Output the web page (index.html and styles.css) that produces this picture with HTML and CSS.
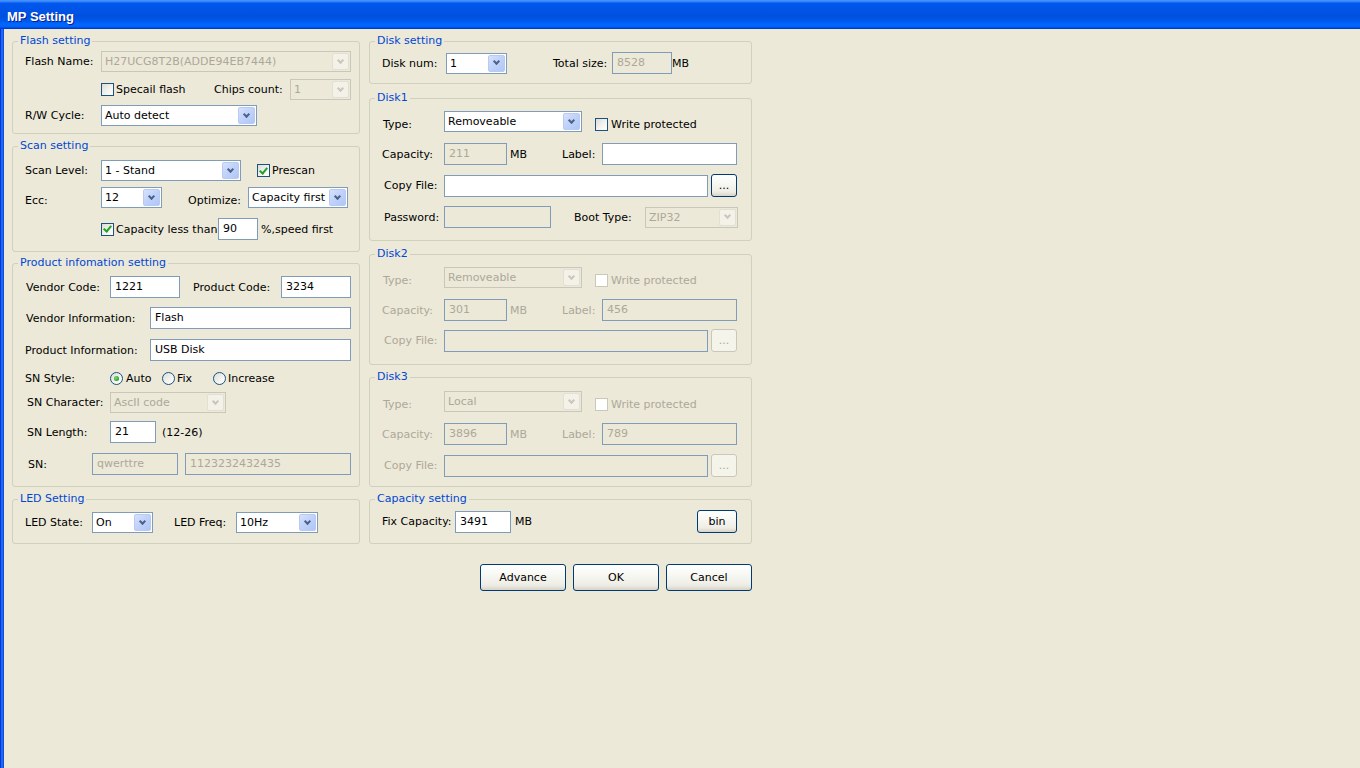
FILE: index.html
```html
<!DOCTYPE html>
<html lang="en">
<head>
<meta charset="utf-8">
<title>MP Setting</title>
<link rel="stylesheet" href="styles.css">
</head>
<body>
<div class="window">
  <div class="titlebar"><span class="title">MP Setting</span></div>
  <div class="client">
    <div class="col col-left">
      <fieldset class="group pb7">
        <legend>Flash setting</legend>
        <div class="row mt3">
          <span class="lbl w76">Flash Name:</span>
          <div class="combo dis w250"><span class="val">H27UCG8T2B(ADDE94EB7444)</span><span class="arr"></span></div>
        </div>
        <div class="row mt7">
          <span class="lbl w76"></span>
          <span class="ck w113"><span class="box"></span><span>Specail flash</span></span>
          <span class="lbl w76">Chips count:</span>
          <div class="combo dis w61"><span class="val">1</span><span class="arr"></span></div>
        </div>
        <div class="row mt5">
          <span class="lbl w76">R/W Cycle:</span>
          <div class="combo w156"><span class="val">Auto detect</span><span class="arr"></span></div>
        </div>
      </fieldset>

      <fieldset class="group mt5 pb11">
        <legend>Scan setting</legend>
        <div class="row mt7">
          <span class="lbl w76">Scan Level:</span>
          <div class="combo w140"><span class="val">1 - Stand</span><span class="arr"></span></div>
          <span class="ck ml16"><span class="box on"></span><span>Prescan</span></span>
        </div>
        <div class="row mt6">
          <span class="lbl w76 lo">Ecc:</span>
          <div class="combo w61"><span class="val">12</span><span class="arr"></span></div>
          <span class="lbl ml26 w60 lo">Optimize:</span>
          <div class="combo w100"><span class="val">Capacity first</span><span class="arr"></span></div>
        </div>
        <div class="row mt10">
          <span class="lbl w76"></span>
          <span class="ck w117"><span class="box on"></span><span>Capacity less than</span></span>
          <input class="tb w40" type="text" value="90">
          <span class="lbl ml3">%,speed first</span>
        </div>
      </fieldset>

      <fieldset class="group mt4 pb11">
        <legend>Product infomation setting</legend>
        <div class="row mt6 pl13">
          <span class="lbl w84">Vendor Code:</span>
          <input class="tb w70" type="text" value="1221">
          <span class="lbl ml13 w88">Product Code:</span>
          <input class="tb w70" type="text" value="3234">
        </div>
        <div class="row mt9 pl13">
          <span class="lbl w124">Vendor Information:</span>
          <input class="tb w201" type="text" value="Flash">
        </div>
        <div class="row mt10">
          <span class="lbl w125">Product Information:</span>
          <input class="tb w201" type="text" value="USB Disk">
        </div>
        <div class="row mt11">
          <span class="lbl w85">SN Style:</span>
          <span class="ck g3 w52"><span class="radio on"></span><span>Auto</span></span>
          <span class="ck w51"><span class="radio"></span><span>Fix</span></span>
          <span class="ck"><span class="radio"></span><span>Increase</span></span>
        </div>
        <div class="row mt7 pl14">
          <span class="lbl w83">SN Character:</span>
          <div class="combo dis w116"><span class="val">AscII code</span><span class="arr"></span></div>
        </div>
        <div class="row mt8 pl14">
          <span class="lbl w83">SN Length:</span>
          <input class="tb w46" type="text" value="21">
          <span class="lbl ml6">(12-26)</span>
        </div>
        <div class="row mt10 pl15">
          <span class="lbl w64">SN:</span>
          <input class="tb w86" type="text" value="qwerttre" disabled>
          <input class="tb ml7 w166" type="text" value="1123232432435" disabled>
        </div>
      </fieldset>

      <fieldset class="group mt5 pb10">
        <legend>LED Setting</legend>
        <div class="row mt6">
          <span class="lbl w67">LED State:</span>
          <div class="combo w61"><span class="val">On</span><span class="arr"></span></div>
          <span class="lbl ml21 w62">LED Freq:</span>
          <div class="combo w82"><span class="val">10Hz</span><span class="arr"></span></div>
        </div>
      </fieldset>
    </div>

    <div class="col col-right">
      <fieldset class="group pb9">
        <legend>Disk setting</legend>
        <div class="row mt4">
          <span class="lbl w64">Disk num:</span>
          <div class="combo w61"><span class="val">1</span><span class="arr"></span></div>
          <span class="lbl ml46 w59">Total size:</span>
          <input class="tb w60" type="text" value="8528" disabled>
          <span class="lbl">MB</span>
        </div>
      </fieldset>

      <fieldset class="group mt7 pb12">
        <legend>Disk1</legend>
        <div class="row mt6 pl13">
          <span class="lbl w61 lo">Type:</span>
          <div class="combo w138"><span class="val">Removeable</span><span class="arr"></span></div>
          <span class="ck g3 ml13 lo"><span class="box"></span><span>Write protected</span></span>
        </div>
        <div class="row mt11">
          <span class="lbl w62">Capacity:</span>
          <input class="tb w63" type="text" value="211" disabled>
          <span class="lbl ml3 w52">MB</span>
          <span class="lbl w40">Label:</span>
          <input class="tb w135" type="text" value="">
        </div>
        <div class="row mt9 pl14">
          <span class="lbl w60">Copy File:</span>
          <input class="tb w264" type="text" value="">
          <button class="btn ml3 w26 h23" type="button">...</button>
        </div>
        <div class="row mt9 pl14">
          <span class="lbl w60">Password:</span>
          <input class="tb w107" type="text" value="" disabled>
          <span class="lbl ml23 w71">Boot Type:</span>
          <div class="combo dis w93"><span class="val">ZIP32</span><span class="arr"></span></div>
        </div>
      </fieldset>

      <fieldset class="group mt6 pb12 off">
        <legend>Disk2</legend>
        <div class="row mt6 pl13">
          <span class="lbl w61 lo">Type:</span>
          <div class="combo dis w138"><span class="val">Removeable</span><span class="arr"></span></div>
          <span class="ck g3 ml13 lo"><span class="box dbox"></span><span>Write protected</span></span>
        </div>
        <div class="row mt11">
          <span class="lbl w62">Capacity:</span>
          <input class="tb w63" type="text" value="301" disabled>
          <span class="lbl ml3 w52">MB</span>
          <span class="lbl w40">Label:</span>
          <input class="tb w135" type="text" value="456" disabled>
        </div>
        <div class="row mt8 pl14">
          <span class="lbl w60">Copy File:</span>
          <input class="tb w264" type="text" value="" disabled>
          <button class="btn ml3 w26 h23" type="button" disabled>...</button>
        </div>
      </fieldset>

      <fieldset class="group mt5 pb9 off">
        <legend>Disk3</legend>
        <div class="row mt7 pl13">
          <span class="lbl w61 lo">Type:</span>
          <div class="combo dis w138"><span class="val">Local</span><span class="arr"></span></div>
          <span class="ck g3 ml13 lo"><span class="box dbox"></span><span>Write protected</span></span>
        </div>
        <div class="row mt11">
          <span class="lbl w62">Capacity:</span>
          <input class="tb w63" type="text" value="3896" disabled>
          <span class="lbl ml3 w52">MB</span>
          <span class="lbl w40">Label:</span>
          <input class="tb w135" type="text" value="789" disabled>
        </div>
        <div class="row mt9 pl14">
          <span class="lbl w60">Copy File:</span>
          <input class="tb w264" type="text" value="" disabled>
          <button class="btn ml3 w26 h23" type="button" disabled>...</button>
        </div>
      </fieldset>

      <fieldset class="group mt5 pb10">
        <legend>Capacity setting</legend>
        <div class="row mt4 pr14">
          <span class="lbl w73">Fix Capacity:</span>
          <input class="tb w56" type="text" value="3491">
          <span class="lbl ml4">MB</span>
          <button class="btn push w40 h23" type="button">bin</button>
        </div>
      </fieldset>

      <div class="actions">
        <button class="btn w86 h27" type="button">Advance</button>
        <button class="btn w86 h27" type="button">OK</button>
        <button class="btn w86 h27" type="button">Cancel</button>
      </div>
    </div>
  </div>
</div>
</body>
</html>
```

FILE: styles.css
```css
* { box-sizing: border-box; }

html, body {
  margin: 0;
  padding: 0;
  width: 1360px;
  height: 768px;
  overflow: hidden;
}

body {
  font-family: "DejaVu Sans", Tahoma, sans-serif;
  font-size: 11px;
  color: #000;
  background: #ECE9D8;
}

.window {
  display: flex;
  flex-direction: column;
  height: 768px;
}

.titlebar {
  flex: none;
  height: 29px;
  padding: 4px 0 0 7px;
  display: flex;
  align-items: center;
  background: linear-gradient(to bottom,
    #4A97FF 0px, #2E7CF8 2px, #0058EE 3px, #0054E6 10px,
    #0050E0 16px, #0058EA 21px, #0066FF 24px, #0063FB 27px,
    #003CCB 28px, #003CCB 29px);
}

.title {
  font-family: "Liberation Sans", Arial, sans-serif;
  font-weight: bold;
  font-size: 13px;
  color: #fff;
  text-shadow: 1px 1px 0 #0A1D8F;
}

.client {
  flex: 1;
  display: flex;
  align-items: flex-start;
  gap: 9px;
  padding: 5px 0 0 12px;
  background: linear-gradient(to right,
    #0832D6 0px, #0832D6 1px, #1A6BF4 1px, #1A6BF4 3px,
    #0B4FDC 3px, #0B4FDC 4px, #ECE9D8 4px);
}

.col { display: flex; flex-direction: column; flex: none; }
.col-left { width: 348px; }
.col-right { width: 383px; }

/* group boxes */
.group {
  margin: 0;
  padding: 0;
  min-width: 0;
  border: 1px solid #D0D0BF;
  border-radius: 3px;
}
.group legend {
  margin-left: 5px;
  padding: 0 2px;
  line-height: 14px;
  color: #0046D5;
}
.group.off .lbl,
.group.off .ck { color: #ACA899; }

/* rows */
.row {
  display: flex;
  align-items: center;
  padding-left: 12px;
}
.lbl { flex: none; white-space: nowrap; }
.lo { padding-top: 5px; }

/* check boxes & radios */
.ck {
  flex: none;
  display: flex;
  align-items: center;
  gap: 2px;
  white-space: nowrap;
}
.ck.g3 { gap: 3px; }
.box {
  flex: none;
  width: 13px;
  height: 13px;
  border: 1px solid #1C5180;
  background: linear-gradient(135deg, #DCDCD7 0%, #F4F4F1 60%, #FFFFFF 100%);
  display: flex;
  align-items: center;
  justify-content: center;
}
.box.on::after {
  content: "";
  width: 3px;
  height: 6px;
  margin-top: -2px;
  border-right: 2px solid #21A121;
  border-bottom: 2px solid #21A121;
  transform: rotate(40deg);
}
.box.dbox {
  border-color: #CAC8BB;
  background: #FFFFFF;
}
.radio {
  flex: none;
  width: 13px;
  height: 13px;
  border-radius: 50%;
  border: 1px solid #1C5180;
  background: linear-gradient(135deg, #DCDCD7 0%, #F4F4F1 60%, #FFFFFF 100%);
  display: flex;
  align-items: center;
  justify-content: center;
}
.radio.on::after {
  content: "";
  width: 5px;
  height: 5px;
  border-radius: 50%;
  background: radial-gradient(circle at 40% 40%, #7BE07B 0%, #21A121 70%, #1A8A1A 100%);
}

/* text boxes */
.tb {
  flex: none;
  font: inherit;
  color: #000;
  height: 22px;
  margin: 0;
  padding: 0 0 1px 4px;
  border: 1px solid #7F9DB9;
  border-radius: 0;
  background: #FFFFFF;
  outline: none;
}
.tb:disabled {
  background: #ECE9D8;
  color: #ACA899;
  -webkit-text-fill-color: #ACA899;
  opacity: 1;
}

/* combo boxes */
.combo {
  flex: none;
  display: flex;
  height: 21px;
  padding: 1px;
  border: 1px solid #7F9DB9;
  background: #FFFFFF;
}
.combo .val {
  flex: 1;
  min-width: 0;
  padding-left: 2px;
  line-height: 17px;
  white-space: nowrap;
  overflow: hidden;
}
.combo .arr {
  flex: none;
  width: 17px;
  border: 1px solid #BAC9F0;
  border-radius: 2px;
  background: linear-gradient(135deg, #D6E2FD 0%, #C1D3FB 45%, #AFC6F6 100%);
  display: flex;
  align-items: center;
  justify-content: center;
}
.combo .arr::after {
  content: "";
  width: 3px;
  height: 3px;
  margin-top: -3px;
  border-right: 2px solid #4D6185;
  border-bottom: 2px solid #4D6185;
  transform: rotate(45deg);
}
.combo.dis {
  border-color: #C9C7BA;
  background: #ECE9D8;
  color: #ACA899;
}
.combo.dis .arr {
  border-color: #E2DFD3;
  background: #F3F1E8;
}
.combo.dis .arr::after {
  border-color: #C9C7BA;
}

/* buttons */
.btn {
  flex: none;
  font: inherit;
  color: #000;
  margin: 0;
  padding: 0;
  border: 1px solid #003C74;
  border-radius: 3px;
  background: linear-gradient(to bottom, #FFFFFF 0%, #F7F7F3 40%, #EEEDE5 80%, #D8D3C8 100%);
}
.btn:disabled {
  border-color: #C9C7BA;
  color: #ACA899;
  background: #F5F4EA;
}
.push { margin-left: auto; }

.actions {
  display: flex;
  justify-content: flex-end;
  gap: 7px;
  margin-top: 20px;
}

/* sizing helpers */
.w26 { width: 26px; } .w40 { width: 40px; } .w46 { width: 46px; }
.w51 { width: 51px; } .w52 { width: 52px; } .w56 { width: 56px; }
.w59 { width: 59px; } .w60 { width: 60px; } .w61 { width: 61px; }
.w62 { width: 62px; } .w63 { width: 63px; } .w64 { width: 64px; }
.w67 { width: 67px; } .w70 { width: 70px; } .w71 { width: 71px; }
.w73 { width: 73px; } .w76 { width: 76px; } .w82 { width: 82px; }
.w83 { width: 83px; } .w84 { width: 84px; } .w85 { width: 85px; }
.w86 { width: 86px; } .w88 { width: 88px; } .w93 { width: 93px; }
.w100 { width: 100px; } .w107 { width: 107px; } .w113 { width: 113px; }
.w116 { width: 116px; } .w117 { width: 117px; } .w124 { width: 124px; }
.w125 { width: 125px; } .w135 { width: 135px; } .w138 { width: 138px; }
.w140 { width: 140px; } .w156 { width: 156px; } .w166 { width: 166px; }
.w201 { width: 201px; } .w250 { width: 250px; } .w264 { width: 264px; }
.h23 { height: 23px; } .h27 { height: 27px; }

.ml3 { margin-left: 3px; } .ml4 { margin-left: 4px; } .ml6 { margin-left: 6px; }
.ml7 { margin-left: 7px; } .ml13 { margin-left: 13px; } .ml16 { margin-left: 16px; }
.ml21 { margin-left: 21px; } .ml23 { margin-left: 23px; } .ml26 { margin-left: 26px; }
.ml46 { margin-left: 46px; }

.mt3 { margin-top: 3px; } .mt4 { margin-top: 4px; } .mt5 { margin-top: 5px; }
.mt6 { margin-top: 6px; } .mt7 { margin-top: 7px; } .mt8 { margin-top: 8px; }
.mt9 { margin-top: 9px; } .mt10 { margin-top: 10px; } .mt11 { margin-top: 11px; }

.pb7 { padding-bottom: 7px; } .pb9 { padding-bottom: 9px; } .pb10 { padding-bottom: 10px; }
.pb11 { padding-bottom: 11px; } .pb12 { padding-bottom: 12px; }

.pl13 { padding-left: 13px; } .pl14 { padding-left: 14px; } .pl15 { padding-left: 15px; }
.pr14 { padding-right: 14px; }
```
